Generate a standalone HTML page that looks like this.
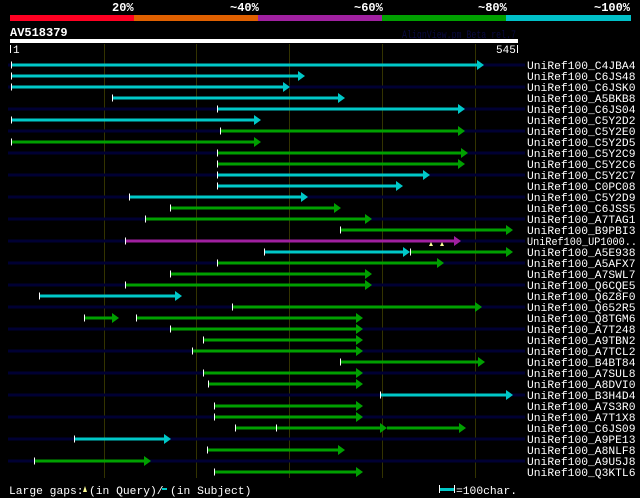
<!DOCTYPE html>
<html><head><style>
html,body{margin:0;padding:0;background:#000;width:640px;height:498px;overflow:hidden}
svg{display:block}
text{font-family:"Liberation Mono",monospace;fill:#fff}
</style></head><body>
<svg width="640" height="498" viewBox="0 0 640 498" xmlns="http://www.w3.org/2000/svg">
<g font-size="12" font-weight="bold">
<text x="112" y="11">20%</text><text x="230" y="11">~40%</text><text x="354" y="11">~60%</text><text x="478" y="11">~80%</text><text x="594" y="11">~100%</text>
</g>
<rect x="10" y="15" width="124" height="6" fill="#ff0022"/>
<rect x="134" y="15" width="124" height="6" fill="#e06000"/>
<rect x="258" y="15" width="124" height="6" fill="#a020a0"/>
<rect x="382" y="15" width="124" height="6" fill="#00a000"/>
<rect x="506" y="15" width="125" height="6" fill="#00c0c8"/>
<text x="402" y="38" font-size="11" textLength="114" lengthAdjust="spacingAndGlyphs" style="fill:#0a0a40">AlignView.pm Beta rel.7</text>
<text x="10" y="36" font-size="12" font-weight="bold">AV518379</text>
<rect x="10" y="39" width="508" height="4" fill="#fff"/>
<rect x="10" y="45" width="1" height="8" fill="#fff"/><text x="13" y="53" font-size="11">1</text>
<rect x="517" y="45" width="1" height="8" fill="#fff"/><text x="496" y="53" font-size="11">545</text>
<g stroke="#333300" stroke-width="1">
<line x1="104.5" y1="44" x2="104.5" y2="478"/><line x1="196.5" y1="44" x2="196.5" y2="478"/><line x1="289.5" y1="44" x2="289.5" y2="478"/><line x1="382.5" y1="44" x2="382.5" y2="478"/><line x1="475.5" y1="44" x2="475.5" y2="478"/>
</g>
<g fill="#000033">
<rect x="8" y="63.5" width="517" height="3"/><rect x="8" y="85.5" width="517" height="3"/><rect x="8" y="107.5" width="517" height="3"/><rect x="8" y="129.5" width="517" height="3"/><rect x="8" y="151.5" width="517" height="3"/><rect x="8" y="173.5" width="517" height="3"/><rect x="8" y="195.5" width="517" height="3"/><rect x="8" y="217.5" width="517" height="3"/><rect x="8" y="239.5" width="517" height="3"/><rect x="8" y="261.5" width="517" height="3"/><rect x="8" y="283.5" width="517" height="3"/><rect x="8" y="305.5" width="517" height="3"/><rect x="8" y="327.5" width="517" height="3"/><rect x="8" y="349.5" width="517" height="3"/><rect x="8" y="371.5" width="517" height="3"/><rect x="8" y="393.5" width="517" height="3"/><rect x="8" y="415.5" width="517" height="3"/><rect x="8" y="437.5" width="517" height="3"/><rect x="8" y="459.5" width="517" height="3"/>
</g>
<g font-size="11.3">
<text x="527" y="69">UniRef100_C4JBA4</text>
<text x="527" y="80">UniRef100_C6JS48</text>
<text x="527" y="91">UniRef100_C6JSK0</text>
<text x="527" y="102">UniRef100_A5BKB8</text>
<text x="527" y="113">UniRef100_C6JS04</text>
<text x="527" y="124">UniRef100_C5Y2D2</text>
<text x="527" y="135">UniRef100_C5Y2E0</text>
<text x="527" y="146">UniRef100_C5Y2D5</text>
<text x="527" y="157">UniRef100_C5Y2C9</text>
<text x="527" y="168">UniRef100_C5Y2C6</text>
<text x="527" y="179">UniRef100_C5Y2C7</text>
<text x="527" y="190">UniRef100_C0PC08</text>
<text x="527" y="201">UniRef100_C5Y2D9</text>
<text x="527" y="212">UniRef100_C6JSS5</text>
<text x="527" y="223">UniRef100_A7TAG1</text>
<text x="527" y="234">UniRef100_B9PBI3</text>
<text x="527" y="245" textLength="110" lengthAdjust="spacingAndGlyphs">UniRef100_UP1000..</text>
<text x="527" y="256">UniRef100_A5E938</text>
<text x="527" y="267">UniRef100_A5AFX7</text>
<text x="527" y="278">UniRef100_A7SWL7</text>
<text x="527" y="289">UniRef100_Q6CQE5</text>
<text x="527" y="300">UniRef100_Q6Z8F0</text>
<text x="527" y="311">UniRef100_Q652R5</text>
<text x="527" y="322">UniRef100_Q8TGM6</text>
<text x="527" y="333">UniRef100_A7T248</text>
<text x="527" y="344">UniRef100_A9TBN2</text>
<text x="527" y="355">UniRef100_A7TCL2</text>
<text x="527" y="366">UniRef100_B4BT84</text>
<text x="527" y="377">UniRef100_A7SUL8</text>
<text x="527" y="388">UniRef100_A8DVI0</text>
<text x="527" y="399">UniRef100_B3H4D4</text>
<text x="527" y="410">UniRef100_A7S3R0</text>
<text x="527" y="421">UniRef100_A7T1X8</text>
<text x="527" y="432">UniRef100_C6JS09</text>
<text x="527" y="443">UniRef100_A9PE13</text>
<text x="527" y="454">UniRef100_A8NLF8</text>
<text x="527" y="465">UniRef100_A9U5J8</text>
<text x="527" y="476">UniRef100_Q3KTL6</text>
</g>
<defs>
<g id="t"><rect x="0" y="-3.5" width="1" height="7" fill="#fff"/></g>
</defs>
<g>
<g fill="#00c8c8">
<rect x="11" y="63.5" width="466" height="3"/><polygon points="477,60 484,65 477,70"/>
<rect x="11" y="74.5" width="287" height="3"/><polygon points="298,71 305,76 298,81"/>
<rect x="11" y="85.5" width="272" height="3"/><polygon points="283,82 290,87 283,92"/>
<rect x="112" y="96.5" width="226" height="3"/><polygon points="338,93 345,98 338,103"/>
<rect x="217" y="107.5" width="241" height="3"/><polygon points="458,104 465,109 458,114"/>
<rect x="11" y="118.5" width="243" height="3"/><polygon points="254,115 261,120 254,125"/>
<rect x="217" y="173.5" width="206" height="3"/><polygon points="423,170 430,175 423,180"/>
<rect x="217" y="184.5" width="179" height="3"/><polygon points="396,181 403,186 396,191"/>
<rect x="129" y="195.5" width="172" height="3"/><polygon points="301,192 308,197 301,202"/>
<rect x="264" y="250.5" width="139" height="3"/><polygon points="403,247 410,252 403,257"/>
<rect x="39" y="294.5" width="136" height="3"/><polygon points="175,291 182,296 175,301"/>
<rect x="380" y="393.5" width="126" height="3"/><polygon points="506,390 513,395 506,400"/>
<rect x="74" y="437.5" width="90" height="3"/><polygon points="164,434 171,439 164,444"/>
</g>
<g fill="#00a000">
<rect x="220" y="129.5" width="238" height="3"/><polygon points="458,126 465,131 458,136"/>
<rect x="11" y="140.5" width="243" height="3"/><polygon points="254,137 261,142 254,147"/>
<rect x="217" y="151.5" width="244" height="3"/><polygon points="461,148 468,153 461,158"/>
<rect x="217" y="162.5" width="241" height="3"/><polygon points="458,159 465,164 458,169"/>
<rect x="170" y="206.5" width="164" height="3"/><polygon points="334,203 341,208 334,213"/>
<rect x="145" y="217.5" width="220" height="3"/><polygon points="365,214 372,219 365,224"/>
<rect x="340" y="228.5" width="166" height="3"/><polygon points="506,225 513,230 506,235"/>
<rect x="410" y="250.5" width="96" height="3"/><polygon points="506,247 513,252 506,257"/>
<rect x="217" y="261.5" width="220" height="3"/><polygon points="437,258 444,263 437,268"/>
<rect x="170" y="272.5" width="195" height="3"/><polygon points="365,269 372,274 365,279"/>
<rect x="125" y="283.5" width="240" height="3"/><polygon points="365,280 372,285 365,290"/>
<rect x="232" y="305.5" width="243" height="3"/><polygon points="475,302 482,307 475,312"/>
<rect x="84" y="316.5" width="28" height="3"/><polygon points="112,313 119,318 112,323"/>
<rect x="136" y="316.5" width="220" height="3"/><polygon points="356,313 363,318 356,323"/>
<rect x="170" y="327.5" width="186" height="3"/><polygon points="356,324 363,329 356,334"/>
<rect x="203" y="338.5" width="153" height="3"/><polygon points="356,335 363,340 356,345"/>
<rect x="192" y="349.5" width="164" height="3"/><polygon points="356,346 363,351 356,356"/>
<rect x="340" y="360.5" width="138" height="3"/><polygon points="478,357 485,362 478,367"/>
<rect x="203" y="371.5" width="153" height="3"/><polygon points="356,368 363,373 356,378"/>
<rect x="208" y="382.5" width="148" height="3"/><polygon points="356,379 363,384 356,389"/>
<rect x="214" y="404.5" width="142" height="3"/><polygon points="356,401 363,406 356,411"/>
<rect x="214" y="415.5" width="142" height="3"/><polygon points="356,412 363,417 356,422"/>
<rect x="235" y="426.5" width="145" height="3"/><polygon points="380,423 387,428 380,433"/>
<rect x="387" y="426.5" width="72" height="3"/><polygon points="459,423 466,428 459,433"/>
<rect x="207" y="448.5" width="131" height="3"/><polygon points="338,445 345,450 338,455"/>
<rect x="34" y="459.5" width="110" height="3"/><polygon points="144,456 151,461 144,466"/>
<rect x="214" y="470.5" width="142" height="3"/><polygon points="356,467 363,472 356,477"/>
</g>
<g fill="#a020a0"><rect x="125" y="239.5" width="329" height="3"/><polygon points="454,236 461,241 454,246"/></g>
<g fill="#ffff99"><polygon points="429,246 431,242 433,246"/><polygon points="440,246 442,242 444,246"/></g>
<g>
<use href="#t" x="11" y="65"/><use href="#t" x="11" y="76"/><use href="#t" x="11" y="87"/><use href="#t" x="112" y="98"/><use href="#t" x="217" y="109"/><use href="#t" x="11" y="120"/><use href="#t" x="220" y="131"/><use href="#t" x="11" y="142"/><use href="#t" x="217" y="153"/><use href="#t" x="217" y="164"/><use href="#t" x="217" y="175"/><use href="#t" x="217" y="186"/><use href="#t" x="129" y="197"/><use href="#t" x="170" y="208"/><use href="#t" x="145" y="219"/><use href="#t" x="340" y="230"/><use href="#t" x="125" y="241"/><use href="#t" x="264" y="252"/><use href="#t" x="410" y="252"/><use href="#t" x="217" y="263"/><use href="#t" x="170" y="274"/><use href="#t" x="125" y="285"/><use href="#t" x="39" y="296"/><use href="#t" x="232" y="307"/><use href="#t" x="84" y="318"/><use href="#t" x="136" y="318"/><use href="#t" x="170" y="329"/><use href="#t" x="203" y="340"/><use href="#t" x="192" y="351"/><use href="#t" x="340" y="362"/><use href="#t" x="203" y="373"/><use href="#t" x="208" y="384"/><use href="#t" x="380" y="395"/><use href="#t" x="214" y="406"/><use href="#t" x="214" y="417"/><use href="#t" x="235" y="428"/><use href="#t" x="276" y="428"/><use href="#t" x="74" y="439"/><use href="#t" x="207" y="450"/><use href="#t" x="34" y="461"/><use href="#t" x="214" y="472"/>
</g>
</g>
<text x="9" y="494" font-size="11.3">Large gaps:</text>
<polygon points="83,492 85,486 87,492" fill="#ffff99"/>
<text x="89" y="494" font-size="11.3">(in Query)/</text>
<rect x="162" y="488" width="5" height="2" fill="#00c8c8"/>
<text x="170" y="494" font-size="11.3">(in Subject)</text>
<rect x="440" y="488" width="14" height="3" fill="#00c8c8"/>
<rect x="439" y="485" width="1" height="8" fill="#fff"/><rect x="454" y="485" width="1" height="8" fill="#fff"/>
<text x="456" y="494" font-size="11.3">=100char.</text>
</svg>
</body></html>
